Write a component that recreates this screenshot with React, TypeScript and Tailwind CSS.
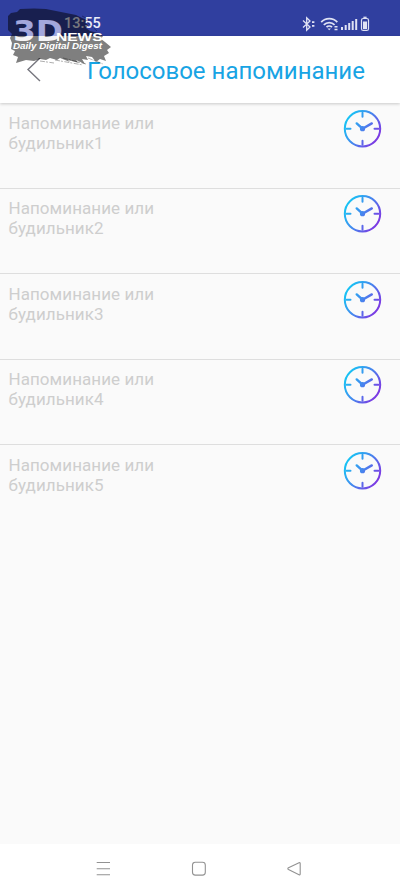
const reminders = [1, 2, 3, 4, 5]

function StatusIcons() {
  return (
    <svg className="h-4 w-[70px]" viewBox="0 0 70 16" fill="none" stroke="#dfe2f4" strokeWidth="1.3">
      <path d="M2 4.5 9 11 5.7 14.2V1.8L9 5 2 11.5" />
      <path d="M11 6.2h2.4M11 9.8h2.4" strokeWidth="1.7" />
      <path d="M20.2 6.2C24.5 1.5 32 1.5 36.3 6.2M22.8 8.8c3-3 7.8-3 10.8 0M25.5 11.2c1.5-1.5 4-1.5 5.5 0" strokeWidth="1.8" />
      <path d="m28.2 14.2-1.7-1.7h3.4z" fill="#dfe2f4" stroke="none" />
      <path d="M33.5 10.8h3M33.5 13.5h3" strokeWidth="1.4" />
      <path d="M41 11v3M44.7 9v5M48.2 7v7M51.7 5v9M55.2 3v11" strokeWidth="2" />
      <rect x="60.5" y="2.5" width="7" height="12" rx="1.8" strokeWidth="1.2" />
      <path d="M62.4 1.3h3.2" />
      <rect x="62" y="5.5" width="4" height="7.7" fill="#dfe2f4" stroke="none" />
    </svg>
  )
}

function ClockIcon() {
  return (
    <svg className="h-[38px] w-[38px] overflow-visible" viewBox="0.5 0.3 38 38" fill="none" stroke="url(#clock)" strokeWidth="2" strokeLinecap="round">
      <defs>
        <linearGradient id="clock" gradientUnits="userSpaceOnUse" x1="3" y1="9" x2="35" y2="29">
          <stop offset="0" stopColor="#16c5f4" />
          <stop offset="0.5" stopColor="#4785ee" />
          <stop offset="1" stopColor="#7f35e2" />
        </linearGradient>
      </defs>
      <circle cx="19" cy="19" r="17.7" />
      <path d="M19 3v4M19 31v4M3 19h4M31 19h4" />
      <path d="m19 19-5.8-5.3M19 19l9.3-5.3" strokeWidth="2.4" />
      <circle cx="19" cy="19" r="1.6" fill="url(#clock)" />
    </svg>
  )
}

function Watermark() {
  return (
    <svg className="absolute left-0 top-0 h-[70px] w-[120px]" viewBox="0 0 120 70">
      <defs>
        <linearGradient id="mark" gradientUnits="userSpaceOnUse" x1="0" y1="35.5" x2="0" y2="36.5">
          <stop offset="0" stopColor="#a3a7dc" />
          <stop offset="1" stopColor="#f4f4f6" />
        </linearGradient>
      </defs>
      <path
        fill="#000"
        fillOpacity="0.5"
        d="M8 24 8 16 11 13 17 12 20 9 34 8.5 46 9 56 11 66 13 76 15 82 18 87 20 85 23 88 25 86 28 90 31 98 33 103 36 101 39 105 42 111 47 107 50 109 53 104 56 106 61 100 59 96 62 92 57 86 56 88 60 82 59 85 64 76 60 79 63 68 60 70 62 60 58 57 60 50 58 46 60 40 59 34 61 26 60 16 63 18 57 13 55 15 51 11 49 12 43 10 38 12 34 8 30Z"
      />
      <path
        stroke="#000"
        strokeOpacity="0.4"
        strokeWidth="0.8"
        strokeDasharray="5 1 2 1.5"
        d="m55 60 28 5M63 58l23 6M40 61l14 2M88 58l15 6M82 16l8 4M87 22l10 9"
      />
      <g fill="#fff" fontWeight="bold">
        <text x="13" y="41" fontSize="28.5" fontFamily="DejaVu Sans" fill="url(#mark)" textLength="50" lengthAdjust="spacingAndGlyphs">3D</text>
        <text x="56" y="41" fontSize="10.5" fontFamily="Liberation Sans" textLength="46.5" lengthAdjust="spacingAndGlyphs">NEWS</text>
        <text x="13" y="48.8" fontSize="8.4" fontFamily="Liberation Sans" fontStyle="italic" textLength="89" lengthAdjust="spacingAndGlyphs">Daily Digital Digest</text>
      </g>
    </svg>
  )
}

export default function App() {
  return (
    <div className="relative flex h-[893px] w-[400px] flex-col overflow-hidden bg-[#fafafa] font-['Roboto',sans-serif]">
      <div className="flex h-9 shrink-0 items-center justify-between bg-[#303f9f] pl-16 pr-[29px] pt-[11px]">
        <span className="pt-px text-[14.5px] font-medium leading-4 text-[#eceefa]">13:55</span>
        <StatusIcons />
      </div>

      <header className="flex h-[67px] shrink-0 items-center bg-white pl-[26px] pt-px shadow-[0_1px_3px_rgba(0,0,0,0.2)]">
        <svg className="h-6 w-4" viewBox="0 0 16 24" fill="none" stroke="#77777f" strokeWidth="1.4">
          <path d="M14 0 2 11.5l12 11.5" />
        </svg>
        <h1 className="ml-[45px] whitespace-nowrap pt-px text-[24px] leading-8 text-[#18a4e4]">Голосовое напоминание</h1>
      </header>

      <main className="grow">
        {reminders.map(n => (
          <div key={n} className={`flex h-[85.5px] justify-between pl-[8.5px] pr-[18.5px] pt-[9.5px] ${n < 5 ? 'border-b border-[#dedede]' : ''}`}>
            <p className="w-[160px] text-[17px] leading-5 tracking-[0.06px] text-[#cecece]">
              {`Напоминание или будильник${n}`}
            </p>
            <div className="-mt-[3px]">
              <ClockIcon />
            </div>
          </div>
        ))}
      </main>

      <nav className="flex h-[49px] shrink-0 items-center bg-white pl-24">
        <svg className="h-4 w-[206px]" viewBox="0 0 206 16" fill="none" stroke="#929292" strokeWidth="1.1">
          <path d="M.7 1.5h13.3M.7 7.7h13.3M.7 13.7h13.3" />
          <rect x="96.5" y="1.3" width="12.8" height="12.8" rx="2.8" />
          <path d="M192.5 6.8 203 1.7q1.2-.4 1.2.8v10.5q0 1.2-1.2.8L192.5 8.5q-1.3-.9 0-1.7Z" />
        </svg>
      </nav>

      <Watermark />
    </div>
  )
}
